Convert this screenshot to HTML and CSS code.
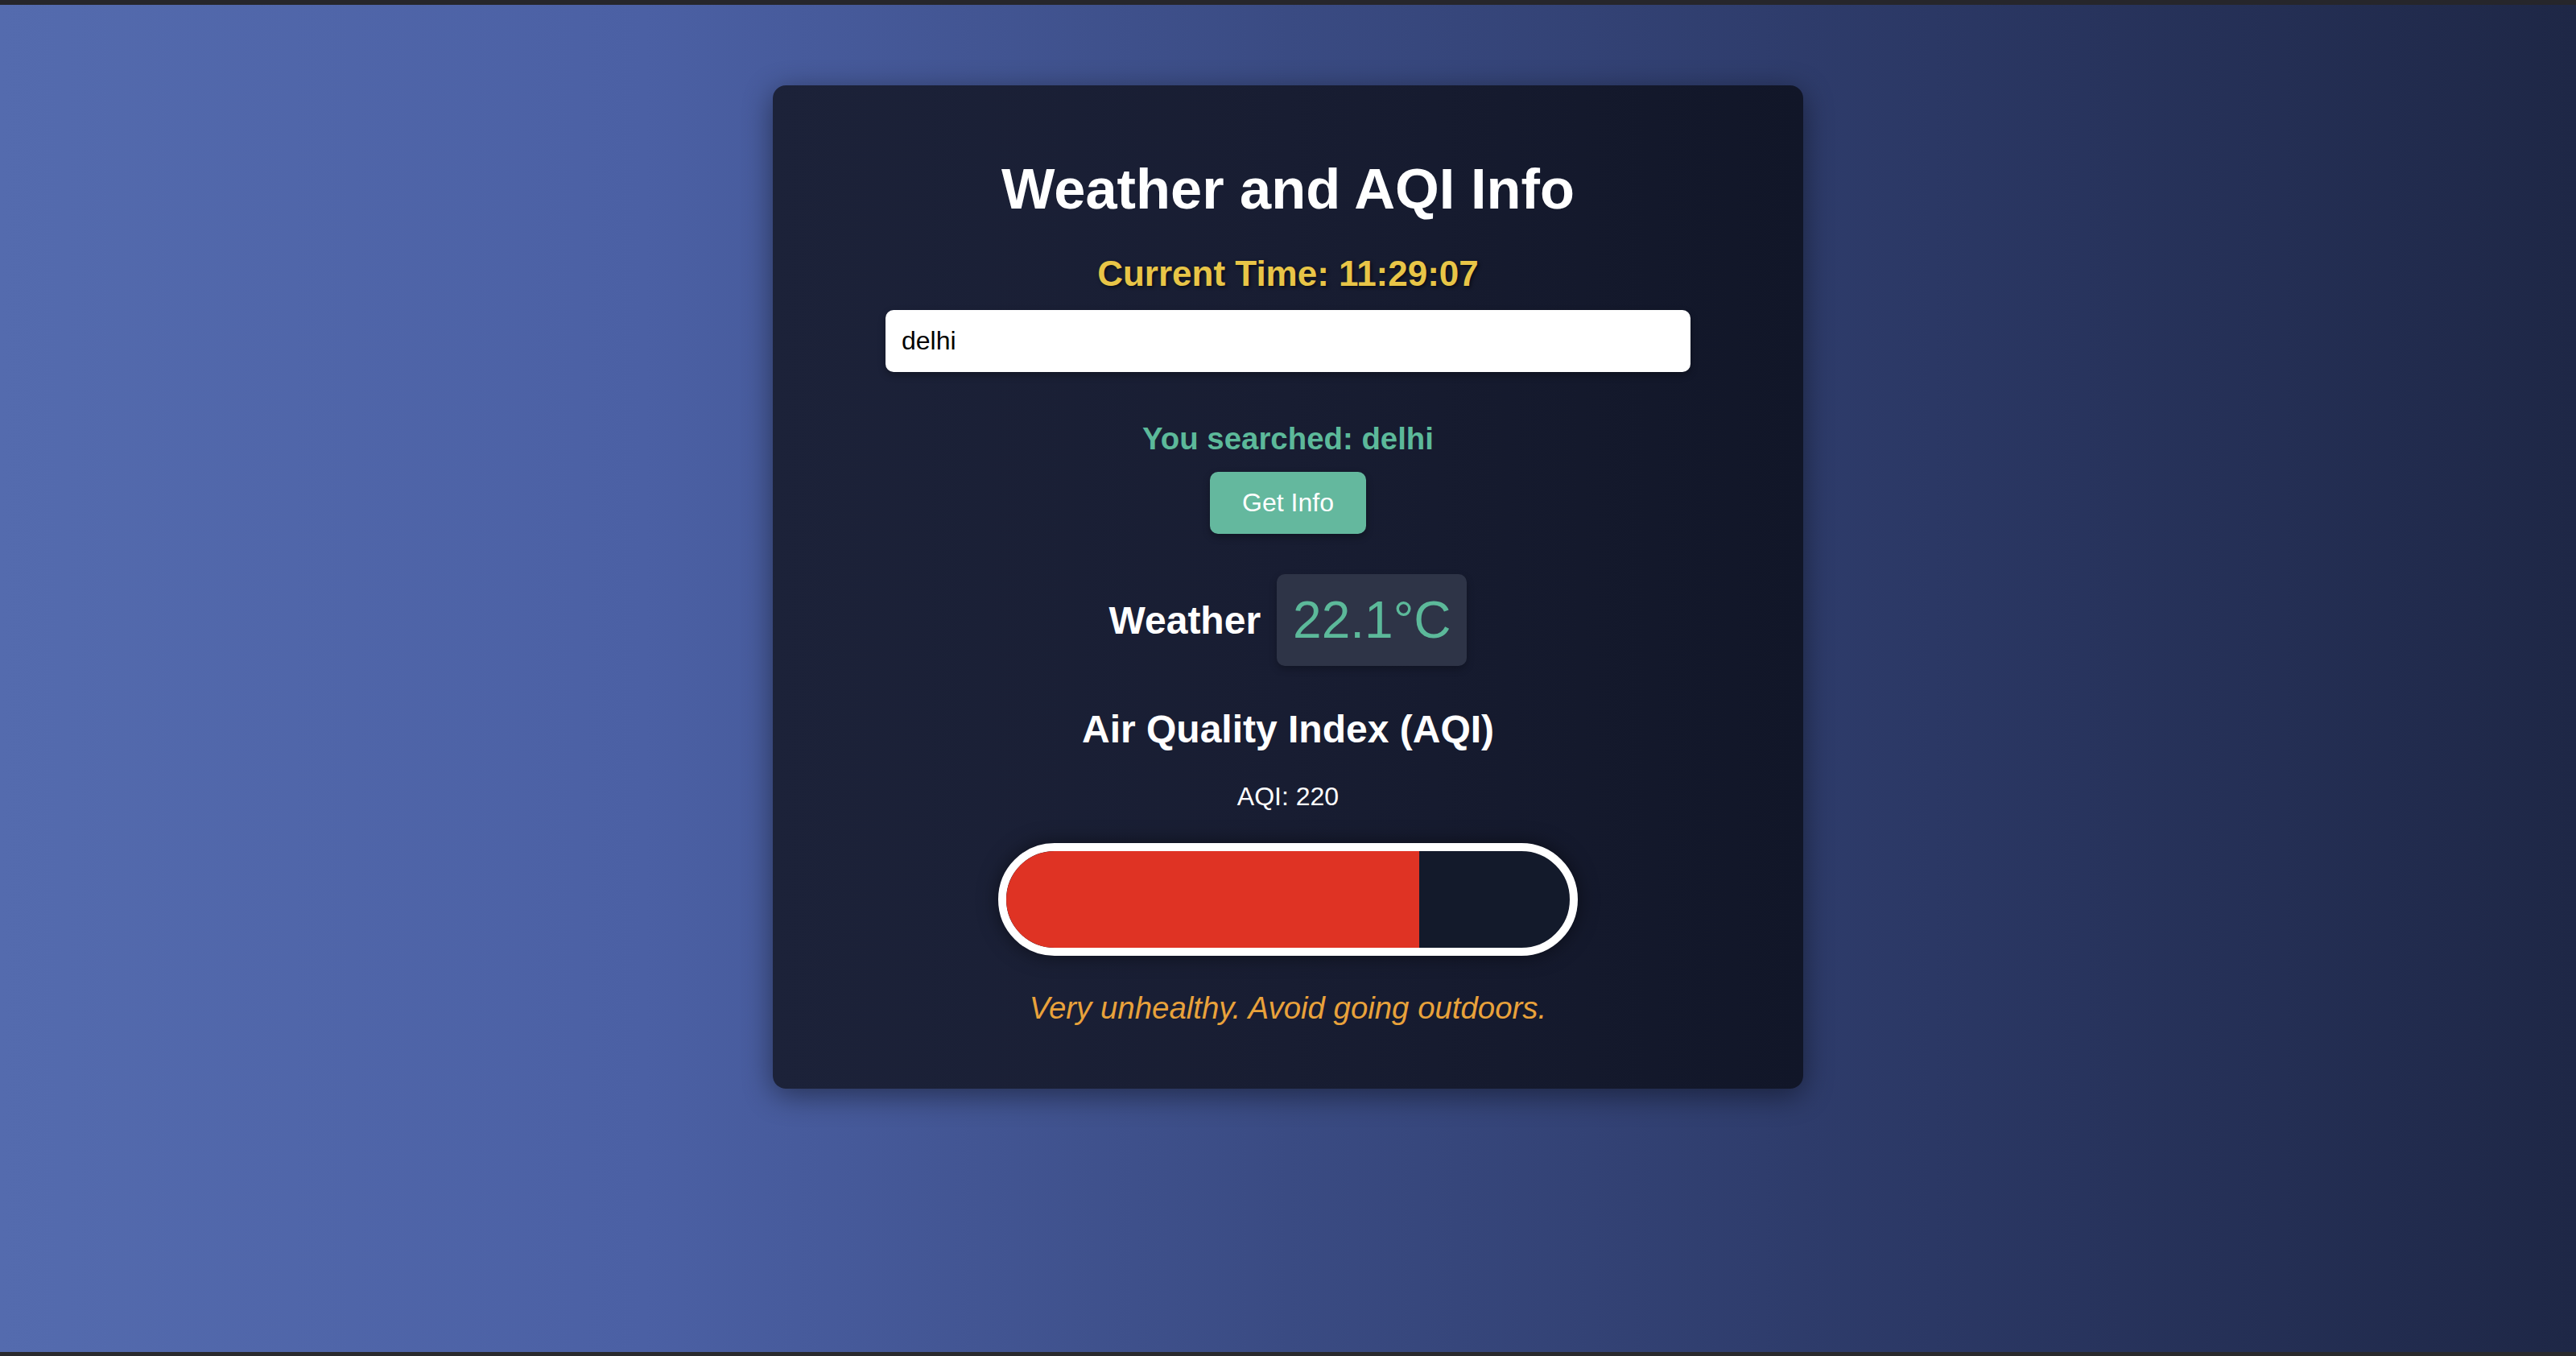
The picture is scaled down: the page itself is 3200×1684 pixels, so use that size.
FILE: index.html
```html
<!DOCTYPE html>
<html lang="en">
<head>
<meta charset="UTF-8">
<title>Weather and AQI Info</title>
<link rel="stylesheet" href="styles.css">
</head>
<body>
  <main class="card">
    <h1 class="title">Weather and AQI Info</h1>
    <p class="clock">Current Time: 11:29:07</p>
    <input class="search" type="text" value="delhi">
    <p class="searched">You searched: delhi</p>
    <button class="btn" type="button">Get Info</button>
    <section class="weather">
      <h2 class="weather-label">Weather</h2>
      <div class="temp">22.1°C</div>
    </section>
    <h2 class="aqi-title">Air Quality Index (AQI)</h2>
    <p class="aqi-value">AQI: 220</p>
    <div class="bar">
      <div class="bar-fill" style="width: 73.33%"></div>
    </div>
    <p class="advice">Very unhealthy. Avoid going outdoors.</p>
  </main>
</body>
</html>
```
FILE: styles.css
```css
* { box-sizing: border-box; }

html, body { margin: 0; padding: 0; }

body {
  height: 100vh;
  border-top: 6px solid #26262b;
  border-bottom: 5px solid #2a2a2d;
  background: linear-gradient(90deg, #546bae 0%, #4b60a4 25%, #3a4b83 50%, #2b3865 75%, #1e2746 100%);
  font-family: "Liberation Sans", Arial, sans-serif;
  display: flex;
  flex-direction: column;
  align-items: center;
}

.card {
  margin-top: 100px;
  width: 1280px;
  padding: 40px;
  border-radius: 16px;
  background: linear-gradient(90deg, #1c2239 0%, #181d32 50%, #111628 100%);
  box-shadow: 0 8px 36px rgba(0, 0, 0, 0.45);
  display: flex;
  flex-direction: column;
  align-items: center;
  text-align: center;
}

.title {
  margin: 49px 0 0;
  font-size: 70.4px;
  line-height: 80px;
  font-weight: 700;
  color: #ffffff;
}

.clock {
  margin: 40px 0 0;
  font-size: 44px;
  font-weight: 700;
  color: #e8c547;
  text-shadow: 2px 2px 4px rgba(0, 0, 0, 0.55);
}

.search {
  margin-top: 20px;
  width: 1000px;
  height: 77px;
  padding: 0 20px;
  border: none;
  border-radius: 10px;
  background: #ffffff;
  font-family: "Liberation Sans", Arial, sans-serif;
  font-size: 32px;
  color: #000000;
  box-shadow: 0 4px 10px rgba(0, 0, 0, 0.3);
  outline: none;
}

.searched {
  margin: 61px 0 0;
  font-size: 38.4px;
  font-weight: 700;
  color: #5cb99a;
}

.btn {
  margin-top: 19px;
  padding: 20px 40px;
  border: none;
  border-radius: 10px;
  background: #64b89e;
  color: #ffffff;
  font-family: "Liberation Sans", Arial, sans-serif;
  font-size: 32px;
  line-height: 37px;
  box-shadow: 0 4px 10px rgba(0, 0, 0, 0.3);
}

.weather {
  margin-top: 50px;
  display: flex;
  align-items: center;
  gap: 20px;
}

.weather-label {
  margin: 0;
  font-size: 48px;
  font-weight: 700;
  color: #ffffff;
}

.temp {
  padding: 20px;
  border-radius: 10px;
  background: #2e3447;
  color: #5cb99a;
  font-size: 64px;
  box-shadow: 0 4px 10px rgba(0, 0, 0, 0.25);
}

.aqi-title {
  margin: 51px 0 0;
  font-size: 48px;
  font-weight: 700;
  color: #ffffff;
}

.aqi-value {
  margin: 38px 0 0;
  font-size: 32px;
  color: #ffffff;
}

.bar {
  margin-top: 39px;
  width: 720px;
  height: 140px;
  border: 10px solid #ffffff;
  border-radius: 70px;
  background: #131a2b;
  overflow: hidden;
  box-shadow: 0 0 24px rgba(0, 0, 0, 0.5);
}

.bar-fill {
  height: 100%;
  background: #df3324;
}

.advice {
  margin: 43px 0 38px;
  font-size: 38.4px;
  font-style: italic;
  color: #e9a23b;
}
```
